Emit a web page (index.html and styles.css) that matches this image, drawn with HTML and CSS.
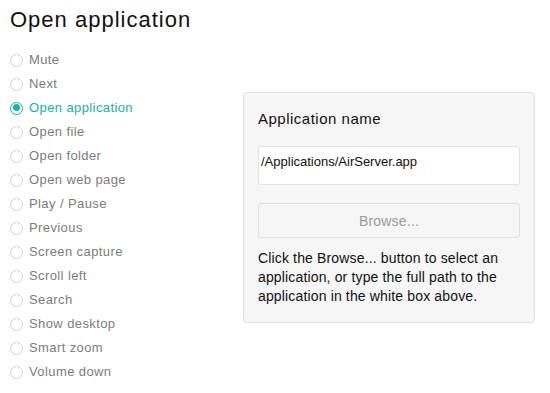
FILE: index.html
```html
<!DOCTYPE html>
<html lang="en">
<head>
  <meta charset="UTF-8">
  <meta name="viewport" content="width=device-width, initial-scale=1.0">
  <title>Open application</title>
  <link rel="stylesheet" href="styles.css">
</head>
<body>
  <div class="page">
    <h1 class="title">Open application</h1>

    <div class="content">
      <ul class="action-list">
        <li class="action"><span class="radio"></span>Mute</li>
        <li class="action"><span class="radio"></span>Next</li>
        <li class="action selected"><span class="radio"></span>Open application</li>
        <li class="action"><span class="radio"></span>Open file</li>
        <li class="action"><span class="radio"></span>Open folder</li>
        <li class="action"><span class="radio"></span>Open web page</li>
        <li class="action"><span class="radio"></span>Play / Pause</li>
        <li class="action"><span class="radio"></span>Previous</li>
        <li class="action"><span class="radio"></span>Screen capture</li>
        <li class="action"><span class="radio"></span>Scroll left</li>
        <li class="action"><span class="radio"></span>Search</li>
        <li class="action"><span class="radio"></span>Show desktop</li>
        <li class="action"><span class="radio"></span>Smart zoom</li>
        <li class="action"><span class="radio"></span>Volume down</li>
      </ul>

      <div class="panel">
        <p class="panel-title">Application name</p>
        <div class="path-box">/Applications/AirServer.app</div>
        <button class="browse">Browse...</button>
        <p class="hint">Click the Browse... button to select an application, or type the full path to the application in the white box above.</p>
      </div>
    </div>
  </div>
</body>
</html>
```

FILE: styles.css
```css
body{
  margin: 0;
  background-color: white;
  font-family: "Liberation Sans", Arial, sans-serif;
}

.page{
  padding: 7px 0 0 10px;
}

.title{
  margin: 0;
  font-size: 22px;
  line-height: 26px;
  font-weight: normal;
  letter-spacing: 1px;
  color: #111;
}

.content{
  display: flex;
  margin-top: 15px;
}

.action-list{
  list-style: none;
  margin: 0;
  padding: 0;
  width: 233px;
}

.action{
  display: flex;
  align-items: center;
  height: 24px;
  font-size: 13px;
  line-height: 24px;
  letter-spacing: 0.4px;
  color: #7c7c7c;
}

.radio{
  box-sizing: border-box;
  width: 13px;
  height: 13px;
  margin-right: 6px;
  border: 1px solid #d4d4d4;
  border-radius: 50%;
  background-color: white;
  position: relative;
}

.selected{
  color: #1ab2a6;
}

.selected .radio{
  border: 1.5px solid #1ab2a6;
}

.selected .radio::after{
  content: "";
  position: absolute;
  left: 1.5px;
  top: 1.5px;
  width: 7px;
  height: 7px;
  border-radius: 50%;
  background-color: #1ab2a6;
}

.panel{
  align-self: flex-start;
  width: 262px;
  margin-top: 44px;
  padding: 16px 14px 16px 14px;
  background-color: #f6f6f6;
  border: 1px solid #e1e1e1;
  border-radius: 4px;
}

.panel-title{
  margin: 0;
  font-size: 15px;
  line-height: 20px;
  letter-spacing: 0.5px;
  color: #111;
}

.path-box{
  margin-top: 17px;
  padding: 7px 2px 14px 2px;
  font-size: 13px;
  line-height: 16px;
  color: #111;
  background-color: white;
  border: 1px solid #e3e3e3;
  border-radius: 3px;
}

.browse{
  display: block;
  box-sizing: border-box;
  width: 100%;
  height: 35px;
  margin-top: 18px;
  padding: 0;
  font-family: "Liberation Sans", Arial, sans-serif;
  font-size: 14px;
  line-height: 16px;
  letter-spacing: 0.2px;
  color: #9a9a9a;
  background-color: #f6f6f6;
  border: 1px solid #e0e0e0;
  border-radius: 3px;
}

.hint{
  margin: 11px 0 0 0;
  font-size: 14px;
  line-height: 19px;
  letter-spacing: 0.15px;
  color: #111;
}
```
